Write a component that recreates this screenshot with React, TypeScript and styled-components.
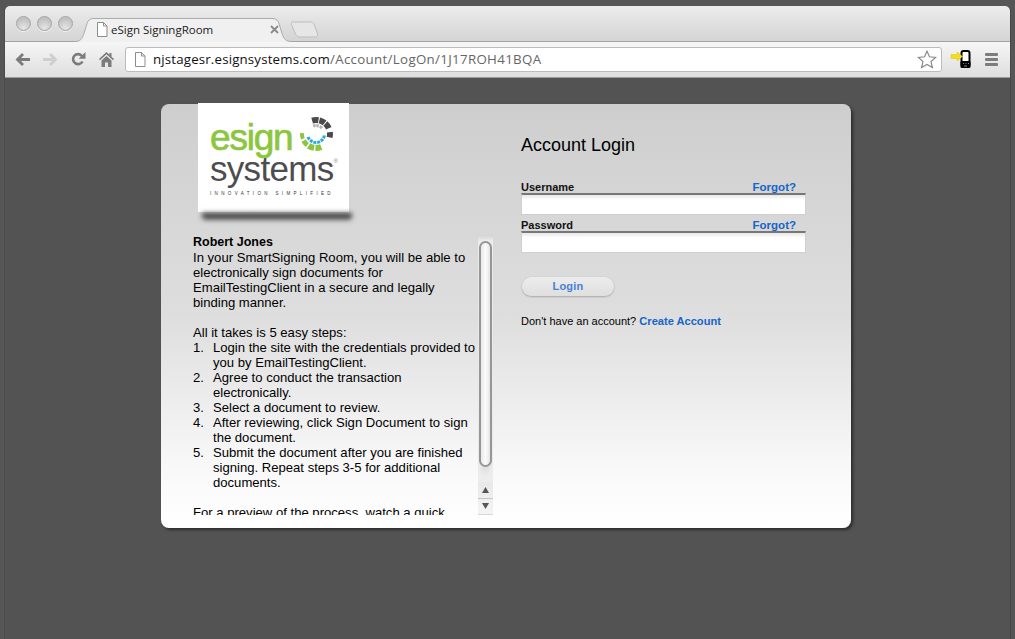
import React from 'react'
import styled, { createGlobalStyle } from 'styled-components'

const GlobalStyle = createGlobalStyle`
  html, body {
    margin: 0;
    height: 639px;
    overflow: hidden;
    background: #565656;
    font-family: "Liberation Sans", Arial, sans-serif;
  }
`

const Window = styled.div`
  margin: 6px 5px 0;
  width: 1005px;
  height: 633px;
  display: flex;
  flex-direction: column;
  border-radius: 5px 5px 0 0;
  overflow: hidden;
  background: #535353;
  box-shadow: 1px 0 0 #474747, -1px 0 0 #4c4c4c;
`

const TabStrip = styled.div`
  height: 35px;
  flex: none;
  display: flex;
  align-items: flex-end;
  padding-left: 11px;
  background: linear-gradient(#ececec, #d4d4d4);
  border-bottom: 1px solid #a3a3a3;
  position: relative;
`

const Lights = styled.div`
  display: flex;
  gap: 6px;
  align-self: flex-start;
  margin-top: 10px;
  margin-right: 2px;
`

const Light = styled.span`
  width: 15px;
  height: 15px;
  box-sizing: border-box;
  border-radius: 50%;
  border: 1px solid #a4a4a4;
  background: radial-gradient(circle at 50% 85%, #e6e6e6, #c2c2c2 70%);
  box-shadow: 0 1px 0 #f2f2f2;
`

const Tab = styled.div`
  position: relative;
  width: 217px;
  height: 25px;
  margin-bottom: -1px;
  display: flex;
  align-items: center;
  padding: 0 0 0 21px;
  box-sizing: border-box;
`

const TabShape = styled.svg`
  position: absolute;
  left: 0;
  top: 0;
`

const TabIcon = styled.span`
  position: relative;
  display: flex;
  margin-right: 3px;
`

const TabTitle = styled.span`
  position: relative;
  width: 159px;
  font-family: "Open Sans", sans-serif;
  font-size: 11.5px;
  color: #1a1a1a;
`

const TabClose = styled.svg`
  position: relative;
`

const NewTab = styled.svg`
  margin: 0 0 3px -1px;
`

const Toolbar = styled.div`
  height: 36px;
  flex: none;
  box-sizing: border-box;
  display: flex;
  align-items: center;
  padding: 0 0 1px 3px;
  background: linear-gradient(#f6f6f6, #dedede);
  border-bottom: 1px solid #9d9d9d;
`

const NavButton = styled.button`
  width: 28px;
  height: 24px;
  flex: none;
  padding: 0;
  border: 0;
  background: none;
  display: flex;
  align-items: center;
  justify-content: center;
`

const Omnibox = styled.div`
  width: 817px;
  height: 25px;
  flex: none;
  box-sizing: border-box;
  margin-left: 5px;
  display: flex;
  align-items: center;
  padding: 0 4px 0 8px;
  background: #fff;
  border: 1px solid #bcbcbc;
  border-radius: 3px;
`

const UrlIcon = styled.span`
  display: flex;
  margin-right: 7px;
  flex: none;
`

const Url = styled.div`
  flex: 1;
  font-family: "Open Sans", sans-serif;
  font-size: 13.3px;
  letter-spacing: 0.16px;
  color: #111;
  white-space: nowrap;
`

const UrlPath = styled.span`
  letter-spacing: 0.32px;
  color: #666;
`

const ExtensionIcon = styled.svg`
  flex: none;
  margin-left: 8px;
`

const MenuIcon = styled.div`
  width: 13px;
  flex: none;
  margin-left: 14px;
  display: flex;
  flex-direction: column;
  gap: 2px;
  span {
    height: 3px;
    border-radius: 1px;
    background: #7d7d7d;
  }
`

const Content = styled.main`
  flex: 1;
  padding: 26px 0 0 156px;
`

const Card = styled.section`
  width: 690px;
  height: 424px;
  display: flex;
  border-radius: 8px;
  background: linear-gradient(#cecece, #dedede 50%, #f8f8f8 85%, #ffffff);
  box-shadow: 2px 2px 3px #2e2e2e;
`

const LeftColumn = styled.div`
  width: 360px;
  flex: none;
  box-sizing: border-box;
  padding-left: 32px;
`

const Logo = styled.div`
  position: relative;
  width: 151px;
  height: 109px;
  margin: -1px 0 23px 5px;
  box-sizing: border-box;
  padding: 20px 0 0 12px;
  background: #fff;
  &::after {
    content: '';
    position: absolute;
    left: 4px;
    right: -3px;
    bottom: -8px;
    height: 7px;
    background: linear-gradient(#2a2a2a, #666);
    border-radius: 0 0 4px 4px;
    filter: blur(2.5px);
  }
`

const LogoMark = styled.svg`
  position: absolute;
  right: 13px;
  top: 11px;
`

const LogoGreen = styled.div`
  font-size: 37px;
  line-height: 30px;
  letter-spacing: -1.2px;
  color: #8cc63f;
  -webkit-text-stroke: 0.7px #8cc63f;
`

const LogoGrey = styled.div`
  font-size: 35px;
  line-height: 30px;
  margin-top: 1px;
  letter-spacing: -0.7px;
  color: #4d4d4f;
  sup {
    font-size: 6px;
    letter-spacing: 0;
    vertical-align: 18px;
    line-height: 0;
    color: #888;
  }
`

const LogoTagline = styled.div`
  font-size: 4.5px;
  line-height: 6px;
  margin-top: 7px;
  letter-spacing: 3.35px;
  color: #333;
  white-space: nowrap;
`

const IntroPanel = styled.div`
  display: flex;
  height: 280px;
`

const IntroText = styled.div`
  width: 285px;
  flex: none;
  overflow: hidden;
  font-size: 13.1px;
  line-height: 15px;
  color: #000;
  strong {
    display: block;
    font-size: 12.5px;
  }
  p {
    margin: 0 0 15px;
  }
`

const Steps = styled.ol`
  margin: 0 0 15px;
  padding: 0;
  list-style: none;
`

const Step = styled.li`
  display: grid;
  grid-template-columns: 20px 1fr;
`

const Scrollbar = styled.div`
  width: 15px;
  flex: none;
  display: flex;
  flex-direction: column;
  background: linear-gradient(#d3d3d3 0, #ececec 6px, #ededed);
`

const ScrollThumb = styled.div`
  height: 226px;
  margin: 6px 1px 0;
  box-sizing: border-box;
  border: 2px solid #969696;
  border-radius: 7px;
  background: linear-gradient(90deg, #e8e8e8, #fbfbfb 50%, #e4e4e4);
  box-shadow: 0 10px 6px -5px #c6c6c6;
`

const ScrollArrows = styled.div`
  margin-top: auto;
  height: 33px;
  display: flex;
  flex-direction: column;
  background: linear-gradient(#e8e8e8, #f4f4f4);
  border-bottom: 1px solid #d8d8d8;
  box-sizing: border-box;
`

const ScrollArrow = styled.div`
  flex: 1;
  display: flex;
  align-items: center;
  justify-content: center;
  font-size: 0;
  & + & {
    border-top: 1px solid #c4c4c4;
  }
`

const LoginColumn = styled.div`
  width: 285px;
  padding-top: 30px;
`

const Title = styled.h1`
  margin: 0 0 25px;
  font-size: 18px;
  line-height: 22px;
  font-weight: 400;
  color: #000;
`

const LabelRow = styled.div`
  display: flex;
  justify-content: space-between;
  height: 12px;
  padding-right: 10px;
  font-size: 11px;
  line-height: 12px;
  font-weight: 700;
  color: #111;
`

const BlueLink = styled.a<{ $size: number }>`
  font-size: ${(p) => p.$size}px;
  font-weight: 700;
  color: #1565c8;
  text-decoration: none;
`

const TextField = styled.input`
  display: block;
  width: 285px;
  height: 22px;
  margin: 0 0 4px;
  padding: 0 4px;
  box-sizing: border-box;
  border: 1px solid #d0d0d0;
  border-top: 2px solid #777;
  border-radius: 0;
  background: linear-gradient(#e8e8e8, #fff 5px);
  outline: none;
`

const LoginButton = styled.button`
  display: block;
  width: 92px;
  height: 19px;
  margin: 24px 0 18px 1px;
  padding: 0 0 1px;
  border: 0;
  border-radius: 10px;
  background: linear-gradient(#ececec, #dfdfdf);
  box-shadow: 0 1px 2px #a8a8a8, 0 0 1px #bbb;
  font-family: inherit;
  font-size: 11px;
  font-weight: 700;
  letter-spacing: 0.2px;
  color: #4a80d2;
`

const SignupNote = styled.div`
  font-size: 11px;
  line-height: 14px;
  color: #000;
`

const RING = [
  { a: 344, b: 10, r: 14, w: 6, c: '#4a4a4a' },
  { a: 14, b: 38, r: 14, w: 6, c: '#4a4a4a' },
  { a: 42, b: 66, r: 14, w: 6, c: '#4a4a4a' },
  { a: 82, b: 104, r: 14, w: 6, c: '#4a4a4a' },
  { a: 158, b: 182, r: 14, w: 6, c: '#8cc63f' },
  { a: 188, b: 212, r: 14, w: 6, c: '#8cc63f' },
  { a: 218, b: 242, r: 14, w: 5, c: '#8cc63f' },
  { a: 250, b: 274, r: 14, w: 4, c: '#8cc63f' },
  { a: 340, b: 358, r: 8.500, w: 3, c: '#b5b5b5' },
  { a: 2, b: 20, r: 8.500, w: 3, c: '#b5b5b5' },
  { a: 26, b: 46, r: 8.500, w: 3, c: '#b5b5b5' },
  { a: 100, b: 120, r: 8.500, w: 3, c: '#29abe2' },
  { a: 126, b: 146, r: 8.500, w: 3, c: '#29abe2' },
  { a: 152, b: 172, r: 8.500, w: 3, c: '#29abe2' },
  { a: 178, b: 198, r: 8.500, w: 3, c: '#29abe2' },
  { a: 204, b: 224, r: 8.500, w: 3, c: '#29abe2' },
  { a: 230, b: 250, r: 8.500, w: 3, c: '#29abe2' },
]

// clockwise from 12 o'clock
const arc = (cx: number, cy: number, r: number, a: number, b: number) => {
  const pt = (d: number) => {
    const t = (d * Math.PI) / 180
    return `${(cx + r * Math.sin(t)).toFixed(2)} ${(cy - r * Math.cos(t)).toFixed(2)}`
  }
  return `M${pt(a)}A${r} ${r} 0 0 1 ${pt(b)}`
}

const PageGlyph = () => (
  <svg width={12} height={15} viewBox="0 0 12 15" fill="#fff" stroke="#8d8d8d">
    <path d="M1.500.5h6l3.500 3.500v10.500h-9.500z" />
    <path d="M7.500.5v3.500h3.500" fill="none" />
  </svg>
)

export default function App() {
  return (
    <>
      <GlobalStyle />
      <Window>
        <TabStrip>
          <Lights>
            <Light />
            <Light />
            <Light />
          </Lights>
          <Tab>
            <TabShape width="217" height="25" viewBox="0 0 217 25">
              <path
                d="M0 25v-.5c5 0 7-2 9-8l3-10c1-3 3-5 6-5h180c3 0 5 2 6 5l3 10c2 6 4 8 10 8v.5z"
                fill="#f0f0f0"
              />
              <path
                d="M0 24.500c5 0 7-2 9-8l3-10c1-3 3-5 6-5h180c3 0 5 2 6 5l3 10c2 6 4 8 10 8"
                fill="none"
                stroke="#ababab"
              />
            </TabShape>
            <TabIcon>
              <PageGlyph />
            </TabIcon>
            <TabTitle>eSign SigningRoom</TabTitle>
            <TabClose width="9" height="9" viewBox="0 0 9 9" stroke="#8a8a8a" strokeWidth="1.800">
              <path d="M1 1l7 7M8 1l-7 7" />
            </TabClose>
          </Tab>
          <NewTab width="28" height="17" viewBox="0 0 28 17">
            <path
              d="M1.500 1h18c2 0 3 .6 4 3l3 9c.3 1.500 0 3-2 3h-16c-2 0-3-1-4-3l-4-9c-.5-1.500-.5-3 1-3z"
              fill="#e6e6e6"
              stroke="#bdbdbd"
            />
          </NewTab>
        </TabStrip>
        <Toolbar>
          <NavButton aria-label="Back">
            <svg width="15" height="13" viewBox="0 0 15 13" fill="#7b7b7b">
              <path d="M7 0l2 2-3 3h9v3H6l3 3-2 2-6.500-6.500z" />
            </svg>
          </NavButton>
          <NavButton aria-label="Forward">
            <svg width="15" height="13" viewBox="0 0 15 13" fill="#cfcfcf">
              <path d="M8 0l-2 2 3 3H0v3h9l-3 3 2 2 6.500-6.500z" />
            </svg>
          </NavButton>
          <NavButton aria-label="Reload">
            <svg width="15" height="14" viewBox="0 0 15 14" fill="none">
              <path d="M11.500 9.500a5 5 0 1 1-.500-5.500" stroke="#7b7b7b" strokeWidth="2.600" />
              <path d="M14.500 0v6.800h-6.800z" fill="#7b7b7b" />
            </svg>
          </NavButton>
          <NavButton aria-label="Home">
            <svg width="15" height="15" viewBox="0 0 15 15" fill="#7b7b7b">
              <path d="M7.500 0l3 2.800V1h2v3.700l2.500 2.400-1 1.100-6.500-6-6.500 6-1-1.100z" />
              <path d="M2.500 8.500l5-4.600 5 4.600V15H9v-4.500H6V15H2.500z" />
            </svg>
          </NavButton>
          <Omnibox>
            <UrlIcon>
              <PageGlyph />
            </UrlIcon>
            <Url>
              njstagesr.esignsystems.com<UrlPath>/Account/LogOn/1J17ROH41BQA</UrlPath>
            </Url>
            <svg width="20" height="19" viewBox="0 0 20 19" fill="#fff" stroke="#8a8a8a" strokeWidth="1.200">
              <path d="M10 1.200l2.500 5.600 6.200.6-4.700 4.100 1.400 6.100-5.400-3.200-5.400 3.200 1.400-6.100L1.300 7.400l6.200-.6z" />
            </svg>
          </Omnibox>
          <ExtensionIcon width="21" height="18" viewBox="0 0 21 18">
            <rect x="11.500" y="1" width="8" height="16" rx="2" fill="#fff" stroke="#000" strokeWidth="2" />
            <rect x="10.500" y="11" width="10" height="7" rx="1.500" fill="#000" />
            <path d="M13 13h1v1h-1zM15.500 13h1v1h-1zM18 13h1v1h-1zM14 15.500h3v1h-3z" fill="#888" />
            <path d="M1 4.500h6V2l5.500 4.500L7 11V8.500H1z" fill="#f5dd1c" stroke="#d9c21a" strokeWidth=".5" />
          </ExtensionIcon>
          <MenuIcon>
            <span />
            <span />
            <span />
          </MenuIcon>
        </Toolbar>
        <Content>
          <Card>
            <LeftColumn>
              <Logo>
                <LogoGreen>esign</LogoGreen>
                <LogoGrey>
                  systems<sup>®</sup>
                </LogoGrey>
                <LogoTagline>INNOVATION SIMPLIFIED</LogoTagline>
                <LogoMark width="40" height="40" viewBox="0 0 40 40" fill="none">
                  {RING.map((s) => (
                    <path key={`${s.r}-${s.a}`} d={arc(20, 20, s.r, s.a, s.b)} stroke={s.c} strokeWidth={s.w} />
                  ))}
                </LogoMark>
              </Logo>
              <IntroPanel>
                <IntroText>
                  <strong>Robert Jones</strong>
                  <p>
                    In your SmartSigning Room, you will be able to electronically sign documents for
                    EmailTestingClient in a secure and legally binding manner.
                  </p>
                  All it takes is 5 easy steps:
                  <Steps>
                    <Step>
                      <span>1.</span>
                      <span>Login the site with the credentials provided to you by EmailTestingClient.</span>
                    </Step>
                    <Step>
                      <span>2.</span>
                      <span>Agree to conduct the transaction electronically.</span>
                    </Step>
                    <Step>
                      <span>3.</span>
                      <span>Select a document to review.</span>
                    </Step>
                    <Step>
                      <span>4.</span>
                      <span>After reviewing, click Sign Document to sign the document.</span>
                    </Step>
                    <Step>
                      <span>5.</span>
                      <span>Submit the document after you are finished signing. Repeat steps 3-5 for additional documents.</span>
                    </Step>
                  </Steps>
                  For a preview of the process, watch a quick
                </IntroText>
                <Scrollbar>
                  <ScrollThumb />
                  <ScrollArrows>
                    <ScrollArrow>
                      <svg width="7" height="6" viewBox="0 0 7 6" fill="#555">
                        <path d="M3.500 0L7 6H0z" />
                      </svg>
                    </ScrollArrow>
                    <ScrollArrow>
                      <svg width="7" height="6" viewBox="0 0 7 6" fill="#555">
                        <path d="M0 0h7L3.500 6z" />
                      </svg>
                    </ScrollArrow>
                  </ScrollArrows>
                </Scrollbar>
              </IntroPanel>
            </LeftColumn>
            <LoginColumn>
              <Title>Account Login</Title>
              <LabelRow>
                <span>Username</span>
                <BlueLink $size={11.5} href="#">Forgot?</BlueLink>
              </LabelRow>
              <TextField type="text" />
              <LabelRow>
                <span>Password</span>
                <BlueLink $size={11.5} href="#">Forgot?</BlueLink>
              </LabelRow>
              <TextField type="password" />
              <LoginButton>Login</LoginButton>
              <SignupNote>
                Don't have an account? <BlueLink $size={11.1} href="#">Create Account</BlueLink>
              </SignupNote>
            </LoginColumn>
          </Card>
        </Content>
      </Window>
    </>
  )
}
